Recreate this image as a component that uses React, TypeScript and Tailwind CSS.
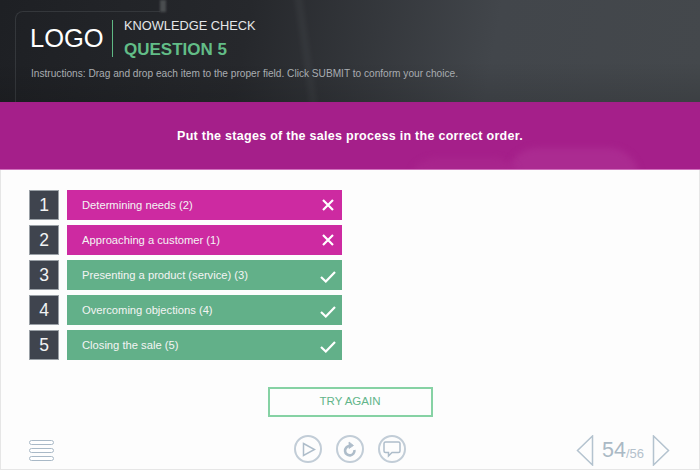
const F = "font-['Liberation_Sans',Arial,sans-serif]";

const rows = [
  { n: 1, text: "Determining needs (2)", ok: false },
  { n: 2, text: "Approaching a customer (1)", ok: false },
  { n: 3, text: "Presenting a product (service) (3)", ok: true },
  { n: 4, text: "Overcoming objections (4)", ok: true },
  { n: 5, text: "Closing the sale (5)", ok: true },
];

function Mark({ ok }: { ok: boolean }) {
  return ok ? (
    <svg width="16" height="12" viewBox="0 0 16 12" fill="none" stroke="#fff" strokeWidth="2.2" className="mt-[3px]">
      <path d="M1 6 L5.8 10.5 L15 1" />
    </svg>
  ) : (
    <svg width="12" height="12" viewBox="0 0 12 12" fill="none" stroke="#fff" strokeWidth="2.2">
      <path d="M1 1 L11 11 M11 1 L1 11" />
    </svg>
  );
}

function Circle({ children }: { children: React.ReactNode }) {
  return (
    <div className="w-[28px] h-[28px] rounded-full border-2 border-[#c2cdd7] flex items-center justify-center">
      {children}
    </div>
  );
}

export default function App() {
  return (
    <div className={`${F} w-[700px] h-[470px] overflow-hidden bg-[#fdfdfd] flex flex-col`}>
      <header className="relative h-[102px] shrink-0 overflow-hidden bg-[linear-gradient(100deg,#1e2024_0%,#26282c_35%,#42464b_70%,#44484c_100%)] px-[30px] pt-[18px]">
        <div className="absolute left-[15px] top-[11px] w-[145px] h-[100px] rounded-tl-[8px] border-l border-t border-[#34373b] blur-[0.5px]" />
        <div className="absolute left-[302px] -top-[5px] w-[8px] h-[112px] bg-[#3f4246] opacity-40 blur-[2px] -rotate-[8deg]" />
        <div className="absolute left-[160px] top-0 w-[6px] h-[12px] bg-[#4a4d50] blur-[1px]" />
        <div className="absolute inset-x-0 bottom-0 h-[40px] bg-[linear-gradient(to_bottom,transparent,rgba(0,0,0,0.12))]" />
        <div className="relative flex items-center">
          <span className="text-[25.5px] leading-[37px] text-white w-[82px]">LOGO</span>
          <div className="w-px h-[37px] bg-[#5fb984]" />
          <div className="ml-[11px] flex flex-col">
            <span className="text-[12.8px] leading-[15px] text-[#e4e6e8]">KNOWLEDGE CHECK</span>
            <span className="mt-[8px] text-[17px] leading-[17px] font-bold text-[#62bd87]">QUESTION 5</span>
          </div>
        </div>
        <p className="relative mt-[9px] ml-px text-[10.15px] leading-[13px] text-[#a9adb1]">
          Instructions: Drag and drop each item to the proper field. Click SUBMIT to conform your choice.
        </p>
      </header>

      <section className="relative h-[68px] shrink-0 overflow-hidden bg-[#a51f8a] border-b border-[#d070bd] pt-px flex items-center justify-center">
        <div className="absolute left-[507px] top-[46px] w-[132px] h-[60px] rounded-full bg-[#ab2b91] blur-[3px]" />
        <div className="absolute left-[410px] top-[56px] w-[110px] h-[50px] rounded-full bg-[#a8258d] blur-[3px]" />
        <h1 className="relative text-[12.5px] font-bold tracking-[0.28px] text-white">
          Put the stages of the sales process in the correct order.
        </h1>
      </section>

      <main className="flex-1 flex flex-col pl-[28px] pr-[28px] pt-[20px] border-x border-b border-[#e6e6e6]">
        <div className="flex flex-col gap-[5px]">
          {rows.map((r) => (
            <div key={r.n} className="flex h-[30px] gap-[8px]">
              <div className="w-[30px] flex items-center justify-center bg-[#3f444e] border border-[#9aa0a6] text-[17.5px] leading-[26px] text-[#f2f3f4]">
                {r.n}
              </div>
              <div
                className={`w-[275px] flex items-center justify-between pl-[15px] pr-[6px] text-[11.2px] text-[#f4f4f4] ${
                  r.ok ? "bg-[#62b089]" : "bg-[#cd2aa1]"
                }`}
              >
                <span>{r.text}</span>
                <span className="w-[16px] flex justify-center">
                  <Mark ok={r.ok} />
                </span>
              </div>
            </div>
          ))}
        </div>

        <button className="self-center mt-[27px] w-[165px] h-[30px] border-2 border-[#86d2a4] text-[11.5px] text-[#62b58a] flex items-center justify-center">
          TRY AGAIN
        </button>

        <footer className="mt-[18px] grid grid-cols-[1fr_auto_1fr] items-center">
          <div className="flex flex-col gap-[3px] w-[25px]">
            {[0, 1, 2].map((i) => (
              <div key={i} className="h-[5px] rounded-full border border-[#a9b9c7] bg-white" />
            ))}
          </div>
          <div className="flex gap-[14px] self-start">
            <Circle>
              <svg width="14" height="15" viewBox="0 0 14 15" fill="none" stroke="#aebdca" strokeWidth="1.5" className="ml-px">
                <path d="M1.5 1.5 L12.5 7.5 L1.5 13.5 Z" />
              </svg>
            </Circle>
            <Circle>
              <svg width="16" height="17" viewBox="0 0 16 17" fill="none" stroke="#aebdca" strokeWidth="2.6">
                <path d="M7.5 5 A4.7 4.7 0 1 0 12.4 9" />
                <path d="M7 1 L11.5 4.5 L7 7.5 Z" fill="#aebdca" strokeWidth="0.8" />
              </svg>
            </Circle>
            <Circle>
              <svg width="18" height="17" viewBox="0 0 18 17" fill="none" stroke="#aebdca" strokeWidth="1.5">
                <path d="M2.5 1 H15.5 A1.5 1.5 0 0 1 17 2.5 V10 A1.5 1.5 0 0 1 15.5 11.5 H9 L5.5 15 V11.5 H2.5 A1.5 1.5 0 0 1 1 10 V2.5 A1.5 1.5 0 0 1 2.5 1 Z" />
              </svg>
            </Circle>
          </div>
          <div className="flex items-center justify-end pr-[1px]">
            <svg width="18" height="31" viewBox="0 0 18 31" fill="none" stroke="#b4c3cf" strokeWidth="1.5">
              <path d="M16.5 1 V30 L1.5 15.5 Z" />
            </svg>
            <span className="ml-[8px] text-[21.5px] leading-none text-[#aab9c5] font-normal">54</span>
            <span className="text-[13px] leading-none mt-[5px] text-[#b4c1cc]">/56</span>
            <svg width="18" height="31" viewBox="0 0 18 31" fill="none" stroke="#b4c3cf" strokeWidth="1.5" className="ml-[8px]">
              <path d="M1.5 1 V30 L16.5 15.5 Z" />
            </svg>
          </div>
        </footer>
      </main>
    </div>
  );
}
